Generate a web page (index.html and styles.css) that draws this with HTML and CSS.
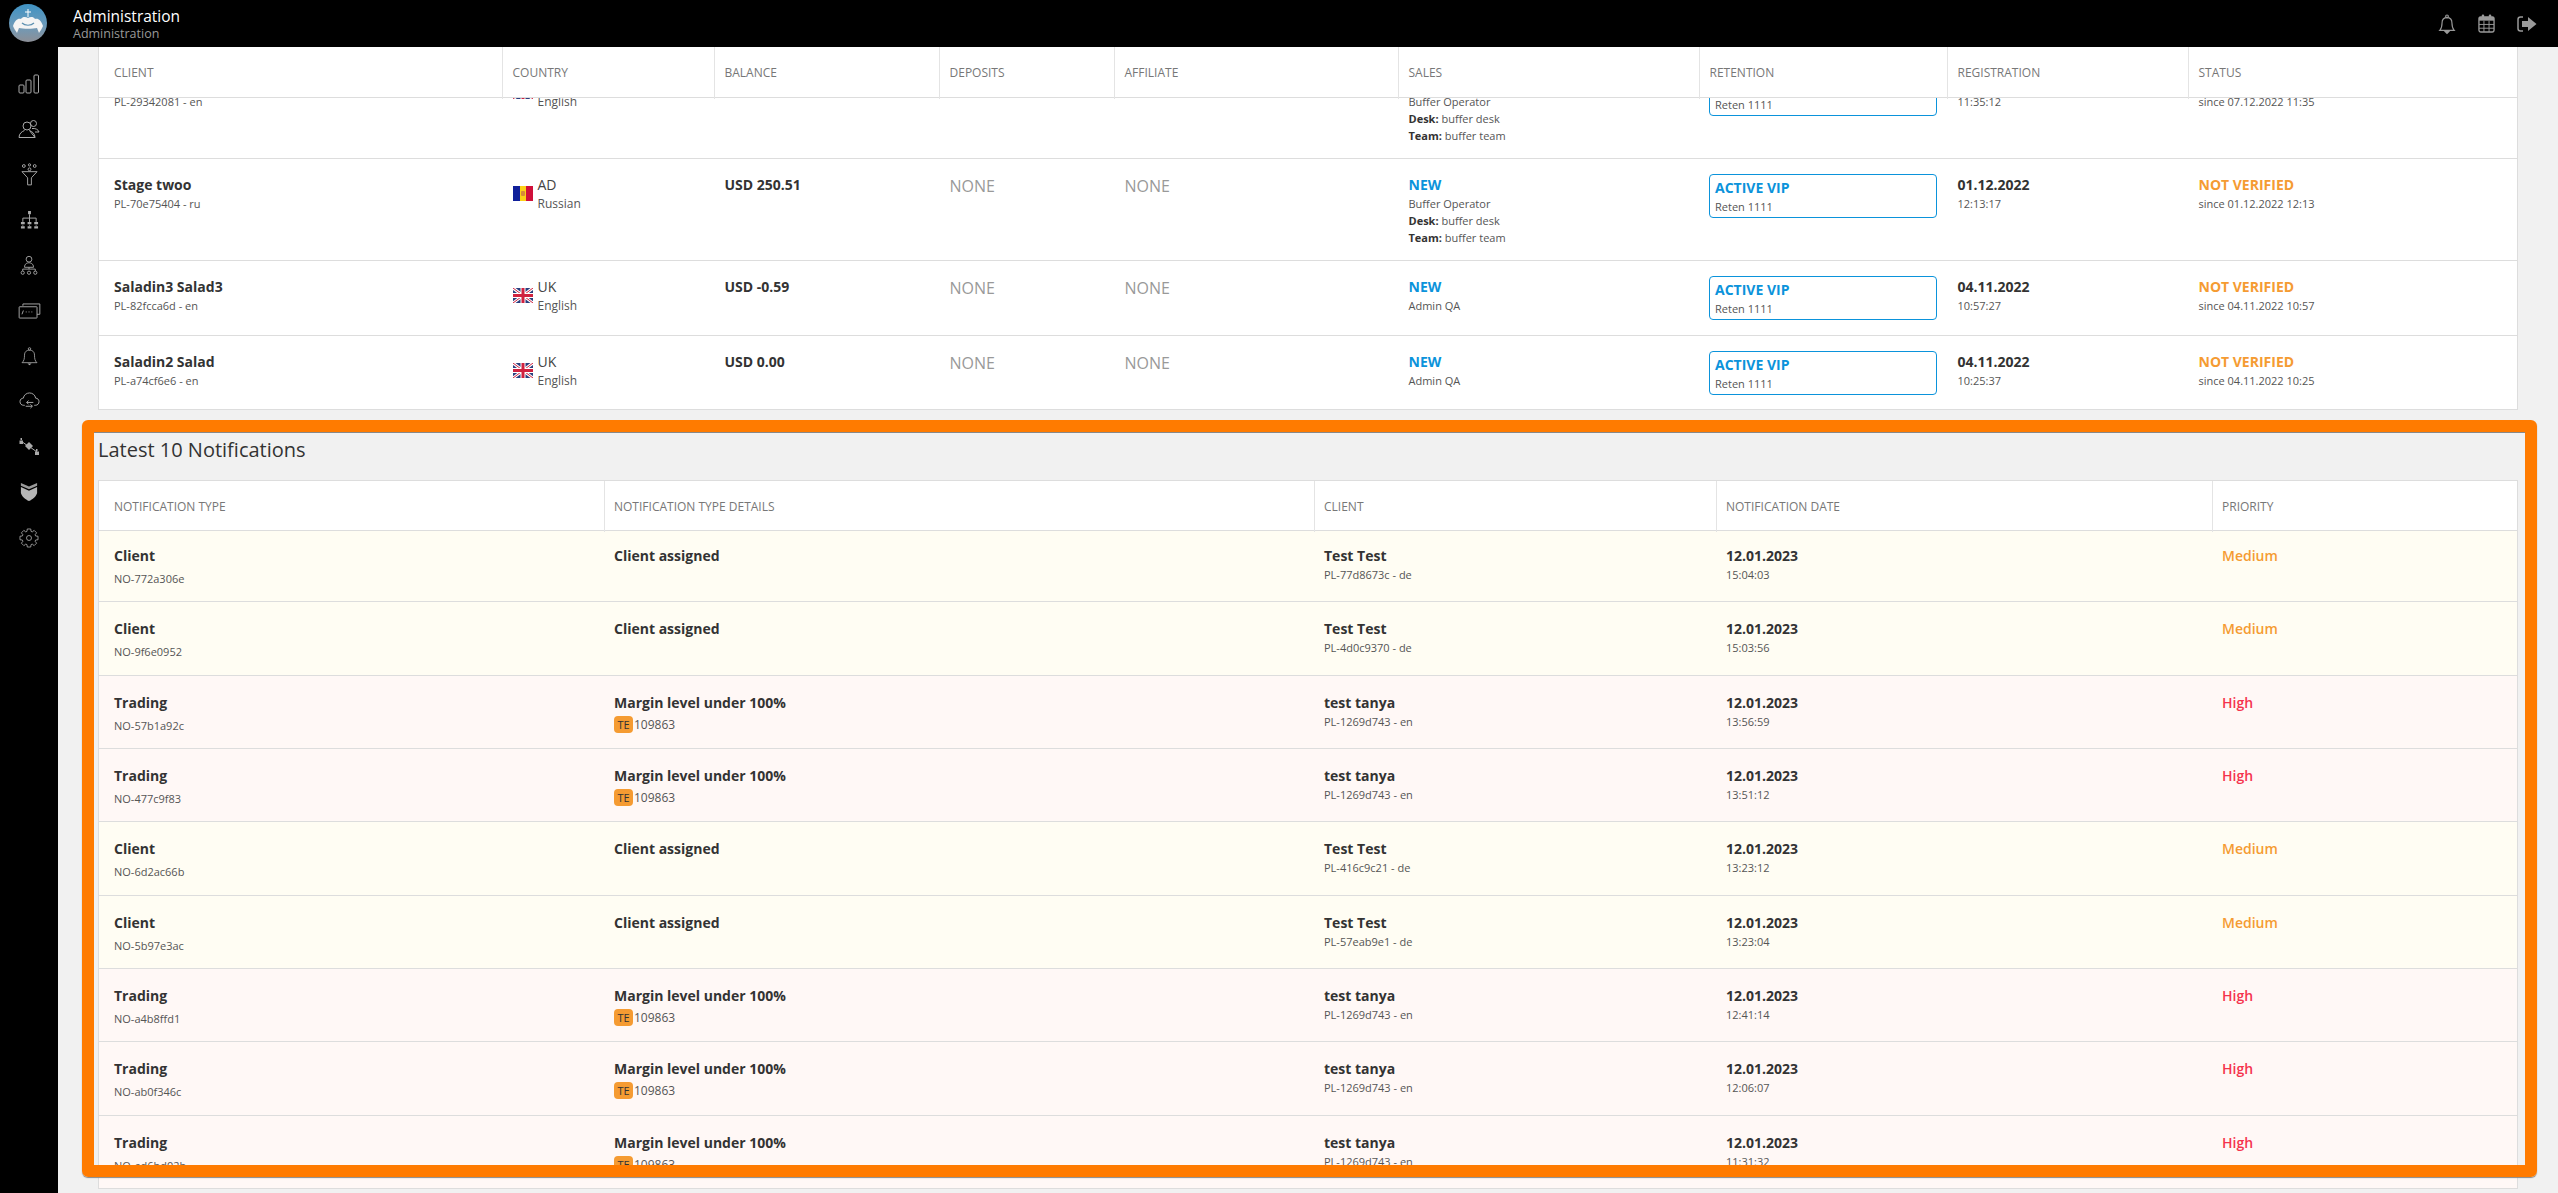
FILE: index.html
```html
<!DOCTYPE html>
<html lang="en">
<head>
    <meta charset="UTF-8">
    <meta name="viewport" content="width=device-width, initial-scale=1.0">
    <title>Administration</title>
    <link rel="stylesheet" href="styles.css">
</head>
<body>
    <svg class="defs" width="0" height="0">
        <symbol id="flag-uk" viewBox="0 0 20 15">
            <rect width="20" height="15" fill="#2a3f7e"/>
            <path d="M0 0L20 15M20 0L0 15" stroke="#fff" stroke-width="3"/>
            <path d="M0 0L20 15M20 0L0 15" stroke="#d0213f" stroke-width="1"/>
            <path d="M10 0V15M0 7.5H20" stroke="#fff" stroke-width="5"/>
            <path d="M10 0V15M0 7.5H20" stroke="#d0213f" stroke-width="3"/>
        </symbol>
        <symbol id="flag-ad" viewBox="0 0 20 15">
            <rect width="7" height="15" fill="#10209a"/>
            <rect x="7" width="6" height="15" fill="#fcd116"/>
            <rect x="13" width="7" height="15" fill="#d0103a"/>
            <rect x="8" y="5" width="4" height="5" rx="1" fill="#d68a3a"/>
        </symbol>
    </svg>

    <header class="topbar">
        <div class="logo">
            <svg viewBox="0 0 38 38" width="38" height="38">
                <defs>
                    <linearGradient id="logo-bg" x1="0" y1="0" x2="0" y2="1">
                        <stop offset="0" stop-color="#3f93c4"/>
                        <stop offset="0.6" stop-color="#6f9ab8"/>
                        <stop offset="1" stop-color="#8d8f96"/>
                    </linearGradient>
                </defs>
                <circle cx="19" cy="19" r="19" fill="url(#logo-bg)"/>
                <path d="M4 22C6 16 9 14 12 15C14 12 17 13 19 14C21 13 24 12 26 15C29 14 32 16 34 22C33 25 31 27 30 29L28 24C24 25 14 25 10 24L8 29C7 27 5 25 4 22Z" fill="#f4f4f4"/>
                <path d="M13 19C16 22 22 22 25 19" stroke="#5b8fb0" stroke-width="1.2" fill="none"/>
                <path d="M19 5V13M16 8H22" stroke="#fff" stroke-width="1"/>
            </svg>
        </div>
        <div class="page-title">
            <div class="page-title-main">Administration</div>
            <div class="page-title-sub">Administration</div>
        </div>
        <div class="top-icons">
            <svg viewBox="0 0 20 24" width="18" height="22" fill="none" stroke="#999" stroke-width="1.3">
                <path d="M2 19C4 17 4.5 15 4.5 11C4.5 7 7 5 10 5C13 5 15.5 7 15.5 11C15.5 15 16 17 18 19Z"/>
                <circle cx="10" cy="3.5" r="1.5"/>
                <path d="M8 20.5H12L10 22.5Z" fill="#999"/>
            </svg>
            <svg viewBox="0 0 18 20" width="17" height="19">
                <rect x="1" y="3" width="16" height="16" rx="2" fill="none" stroke="#999" stroke-width="1.4"/>
                <rect x="1" y="3" width="16" height="4" fill="#999"/>
                <path d="M1 11H17M1 15H17M6.3 7V19M11.7 7V19" stroke="#999" stroke-width="1"/>
                <rect x="4" y="0.5" width="2.5" height="5" rx="1" fill="#999"/>
                <rect x="11.5" y="0.5" width="2.5" height="5" rx="1" fill="#999"/>
            </svg>
            <svg viewBox="0 0 20 16" width="20" height="16">
                <path d="M6 1H3.5C2 1 1 2 1 3.5V12.5C1 14 2 15 3.5 15H6" fill="none" stroke="#999" stroke-width="1.5"/>
                <path d="M5 5H11V1L19.5 8L11 15V11H5Z" fill="#999"/>
            </svg>
        </div>
    </header>

    <div class="layout">
        <nav class="sidebar">
            <!-- dashboard -->
            <a class="nav-item"><svg viewBox="0 0 22 20" width="22" height="20" class="nav-icon">
                <rect x="1" y="11" width="5" height="8" rx="1"/><rect x="8" y="6" width="5" height="13" rx="1"/><rect x="16" y="1" width="4.5" height="18" rx="1"/>
            </svg></a>
            <!-- clients -->
            <a class="nav-item"><svg viewBox="0 0 22 20" width="22" height="20" class="nav-icon">
                <circle cx="9" cy="7" r="4"/><path d="M1 18.5C1 14.5 4 12.5 6.5 11.5M11.5 11.5C14 12.5 17 14.5 17 18.5Z M1 18.5H17"/>
                <circle cx="15.5" cy="4.5" r="3"/><path d="M14 9.5C17 9 20.5 10.5 21 13H17"/>
            </svg></a>
            <!-- leads funnel -->
            <a class="nav-item"><svg viewBox="0 0 18 24" width="17" height="23" class="nav-icon">
                <path d="M1 9H17L11 15.5V23H7V15.5Z"/>
                <circle cx="3" cy="3" r="1.5"/><circle cx="9" cy="1.8" r="1.2"/><circle cx="14.5" cy="3" r="1.5"/><circle cx="9" cy="6.5" r="1.5"/>
            </svg></a>
            <!-- organisation -->
            <a class="nav-item"><svg viewBox="0 0 20 20" width="19" height="20" class="nav-icon">
                <path d="M10 4V8M3 8H17M3 8V12M10 8V12M17 8V12M3 15V16M10 15V16M17 15V16"/>
                <path class="solid" d="M8.5 0.5H11.5V4H8.5ZM1 12H5V14.5H1ZM8 12H12V14.5H8ZM15 12H19V14.5H15ZM1 16.5H5V19H1ZM8 16.5H12V19H8ZM15 16.5H19V19H15Z"/>
            </svg></a>
            <!-- hierarchy -->
            <a class="nav-item"><svg viewBox="0 0 20 22" width="18" height="21" class="nav-icon">
                <circle cx="10" cy="4" r="3.2"/><path d="M5 13C5 9 8 8 10 8C12 8 15 9 15 13Z"/>
                <path d="M10 13V15M3 17V15H17V17"/>
                <circle cx="3" cy="19" r="1.8"/><circle cx="10" cy="19" r="1.8"/><circle cx="17" cy="19" r="1.8"/>
            </svg></a>
            <!-- cards -->
            <a class="nav-item"><svg viewBox="0 0 24 17" width="23" height="16" class="nav-icon">
                <path d="M5 3V1H23V12H20"/><rect x="1" y="4" width="19" height="12" rx="0.5"/>
                <path d="M4 12L5.5 8M8 9.5H9M11 9.5H12M14 9.5H15"/>
            </svg></a>
            <!-- notifications -->
            <a class="nav-item"><svg viewBox="0 0 20 24" width="17" height="20" class="nav-icon">
                <path d="M1 20C3.5 18 4 15 4 11C4 6.5 7 5 10 5C13 5 16 6.5 16 11C16 15 16.5 18 19 20Z"/>
                <circle cx="10" cy="3.5" r="1.5"/><path class="solid" d="M7.5 21H12.5L10 23Z"/>
            </svg></a>
            <!-- cloud transfer -->
            <a class="nav-item"><svg viewBox="0 0 22 20" width="21" height="19" class="nav-icon">
                <path d="M6 14H5C2.5 14 1 12.5 1 10C1 7.5 3 6.5 4.5 6.5C5 3 8 1 11 1C14 1 17 3 17.5 6.5C19.5 6.5 21 8 21 10C21 12.5 19.5 14 17 14H16"/>
                <path d="M15 11H8M10 9L8 11L10 13M7 15H14M12 13L14 15L12 17"/>
            </svg></a>
            <!-- workflow -->
            <a class="nav-item"><svg viewBox="0 0 20 17" width="20" height="17" class="nav-icon">
                <path d="M2 3L9 8M11 9L18 14"/>
                <path class="solid" d="M1.5 0H3V2H1.5ZM0.5 2.5H4V6H0.5ZM10 4L14 8L10 12L6 8ZM17 11H18.5V13H17ZM16 13.5H20V17H16Z"/>
            </svg></a>
            <!-- shield -->
            <a class="nav-item"><svg viewBox="0 0 20 20" width="18" height="20">
                <path d="M1 0L10 4L19 0V3L10 7L1 3Z" fill="#9a9a9a"/>
                <path d="M1 4.5L10 8.5L19 4.5V11C18 15 14 18 10 20C6 18 2 15 1 11Z" fill="#b5b5b5"/>
            </svg></a>
            <!-- settings -->
            <a class="nav-item"><svg viewBox="0 0 24 24" width="20" height="20" class="nav-icon">
                <g transform="translate(12 12)">
                    <polygon stroke-linejoin="round" points="7.94,-2.43 10.83,-2.1 10.83,2.1 7.94,2.43 7.33,3.9 9.14,6.17 6.17,9.14 3.9,7.33 2.43,7.94 2.1,10.83 -2.1,10.83 -2.43,7.94 -3.9,7.33 -6.17,9.14 -9.14,6.17 -7.33,3.9 -7.94,2.43 -10.83,2.1 -10.83,-2.1 -7.94,-2.43 -7.33,-3.9 -9.14,-6.17 -6.17,-9.14 -3.9,-7.33 -2.43,-7.94 -2.1,-10.83 2.1,-10.83 2.43,-7.94 3.9,-7.33 6.17,-9.14 9.14,-6.17 7.33,-3.9"/>
                    <circle r="3"/>
                </g>
            </svg></a>
        </nav>

        <main class="content">
            <!-- Latest clients table, scrolled a little under its header -->
            <section class="data-table clients">
                <div class="head-row">
                    <div class="cell">Client</div>
                    <div class="cell">Country</div>
                    <div class="cell">Balance</div>
                    <div class="cell">Deposits</div>
                    <div class="cell">Affiliate</div>
                    <div class="cell">Sales</div>
                    <div class="cell">Retention</div>
                    <div class="cell">Registration</div>
                    <div class="cell">Status</div>
                </div>
                <div class="rows-clip">
                    <div class="client-rows">
                        <div class="row tall">
                            <div class="cell"><span class="name"></span><small class="sub">PL-29342081 - en</small></div>
                            <div class="cell country"><svg class="flag"><use href="#flag-uk"/></svg><div><span class="code"></span><small class="sub lang">English</small></div></div>
                            <div class="cell"></div>
                            <div class="cell"></div>
                            <div class="cell"></div>
                            <div class="cell"><span class="new"></span><small class="sub">Buffer Operator</small><small class="sub"><b>Desk:</b> buffer desk</small><small class="sub"><b>Team:</b> buffer team</small></div>
                            <div class="cell"><div class="retention"><span class="new"></span><small class="sub">Reten 1111</small></div></div>
                            <div class="cell"><span class="name"></span><small class="sub">11:35:12</small></div>
                            <div class="cell"><span class="status"></span><small class="sub">since 07.12.2022 11:35</small></div>
                        </div>
                        <div class="row tall">
                            <div class="cell"><strong class="name">Stage twoo</strong><small class="sub">PL-70e75404 - ru</small></div>
                            <div class="cell country"><svg class="flag"><use href="#flag-ad"/></svg><div><span class="code">AD</span><small class="sub lang">Russian</small></div></div>
                            <div class="cell"><strong class="name">USD 250.51</strong></div>
                            <div class="cell none">NONE</div>
                            <div class="cell none">NONE</div>
                            <div class="cell"><strong class="new">NEW</strong><small class="sub">Buffer Operator</small><small class="sub"><b>Desk:</b> buffer desk</small><small class="sub"><b>Team:</b> buffer team</small></div>
                            <div class="cell"><div class="retention"><strong class="new">ACTIVE VIP</strong><small class="sub">Reten 1111</small></div></div>
                            <div class="cell"><strong class="name">01.12.2022</strong><small class="sub">12:13:17</small></div>
                            <div class="cell"><strong class="status">NOT VERIFIED</strong><small class="sub">since 01.12.2022 12:13</small></div>
                        </div>
                        <div class="row short">
                            <div class="cell"><strong class="name">Saladin3 Salad3</strong><small class="sub">PL-82fcca6d - en</small></div>
                            <div class="cell country"><svg class="flag"><use href="#flag-uk"/></svg><div><span class="code">UK</span><small class="sub lang">English</small></div></div>
                            <div class="cell"><strong class="name">USD -0.59</strong></div>
                            <div class="cell none">NONE</div>
                            <div class="cell none">NONE</div>
                            <div class="cell"><strong class="new">NEW</strong><small class="sub">Admin QA</small></div>
                            <div class="cell"><div class="retention"><strong class="new">ACTIVE VIP</strong><small class="sub">Reten 1111</small></div></div>
                            <div class="cell"><strong class="name">04.11.2022</strong><small class="sub">10:57:27</small></div>
                            <div class="cell"><strong class="status">NOT VERIFIED</strong><small class="sub">since 04.11.2022 10:57</small></div>
                        </div>
                        <div class="row short">
                            <div class="cell"><strong class="name">Saladin2 Salad</strong><small class="sub">PL-a74cf6e6 - en</small></div>
                            <div class="cell country"><svg class="flag"><use href="#flag-uk"/></svg><div><span class="code">UK</span><small class="sub lang">English</small></div></div>
                            <div class="cell"><strong class="name">USD 0.00</strong></div>
                            <div class="cell none">NONE</div>
                            <div class="cell none">NONE</div>
                            <div class="cell"><strong class="new">NEW</strong><small class="sub">Admin QA</small></div>
                            <div class="cell"><div class="retention"><strong class="new">ACTIVE VIP</strong><small class="sub">Reten 1111</small></div></div>
                            <div class="cell"><strong class="name">04.11.2022</strong><small class="sub">10:25:37</small></div>
                            <div class="cell"><strong class="status">NOT VERIFIED</strong><small class="sub">since 04.11.2022 10:25</small></div>
                        </div>
                    </div>
                </div>
            </section>

            <h2 class="section-title">Latest 10 Notifications</h2>

            <section class="data-table notifications">
                <div class="head-row">
                    <div class="cell">Notification type</div>
                    <div class="cell">Notification type details</div>
                    <div class="cell">Client</div>
                    <div class="cell">Notification date</div>
                    <div class="cell">Priority</div>
                </div>
                <div class="rows-clip">
                    <div class="notif-rows">
                        <div class="row medium">
                            <div class="cell"><strong class="name">Client</strong><small class="sub spaced">NO-772a306e</small></div>
                            <div class="cell"><strong class="name">Client assigned</strong></div>
                            <div class="cell"><strong class="name">Test Test</strong><small class="sub">PL-77d8673c - de</small></div>
                            <div class="cell"><strong class="name">12.01.2023</strong><small class="sub">15:04:03</small></div>
                            <div class="cell"><strong class="priority">Medium</strong></div>
                        </div>
                        <div class="row medium">
                            <div class="cell"><strong class="name">Client</strong><small class="sub spaced">NO-9f6e0952</small></div>
                            <div class="cell"><strong class="name">Client assigned</strong></div>
                            <div class="cell"><strong class="name">Test Test</strong><small class="sub">PL-4d0c9370 - de</small></div>
                            <div class="cell"><strong class="name">12.01.2023</strong><small class="sub">15:03:56</small></div>
                            <div class="cell"><strong class="priority">Medium</strong></div>
                        </div>
                        <div class="row high">
                            <div class="cell"><strong class="name">Trading</strong><small class="sub spaced">NO-57b1a92c</small></div>
                            <div class="cell"><strong class="name">Margin level under 100%</strong><div class="account"><span class="badge">TE</span>109863</div></div>
                            <div class="cell"><strong class="name">test tanya</strong><small class="sub">PL-1269d743 - en</small></div>
                            <div class="cell"><strong class="name">12.01.2023</strong><small class="sub">13:56:59</small></div>
                            <div class="cell"><strong class="priority">High</strong></div>
                        </div>
                        <div class="row high">
                            <div class="cell"><strong class="name">Trading</strong><small class="sub spaced">NO-477c9f83</small></div>
                            <div class="cell"><strong class="name">Margin level under 100%</strong><div class="account"><span class="badge">TE</span>109863</div></div>
                            <div class="cell"><strong class="name">test tanya</strong><small class="sub">PL-1269d743 - en</small></div>
                            <div class="cell"><strong class="name">12.01.2023</strong><small class="sub">13:51:12</small></div>
                            <div class="cell"><strong class="priority">High</strong></div>
                        </div>
                        <div class="row medium">
                            <div class="cell"><strong class="name">Client</strong><small class="sub spaced">NO-6d2ac66b</small></div>
                            <div class="cell"><strong class="name">Client assigned</strong></div>
                            <div class="cell"><strong class="name">Test Test</strong><small class="sub">PL-416c9c21 - de</small></div>
                            <div class="cell"><strong class="name">12.01.2023</strong><small class="sub">13:23:12</small></div>
                            <div class="cell"><strong class="priority">Medium</strong></div>
                        </div>
                        <div class="row medium">
                            <div class="cell"><strong class="name">Client</strong><small class="sub spaced">NO-5b97e3ac</small></div>
                            <div class="cell"><strong class="name">Client assigned</strong></div>
                            <div class="cell"><strong class="name">Test Test</strong><small class="sub">PL-57eab9e1 - de</small></div>
                            <div class="cell"><strong class="name">12.01.2023</strong><small class="sub">13:23:04</small></div>
                            <div class="cell"><strong class="priority">Medium</strong></div>
                        </div>
                        <div class="row high">
                            <div class="cell"><strong class="name">Trading</strong><small class="sub spaced">NO-a4b8ffd1</small></div>
                            <div class="cell"><strong class="name">Margin level under 100%</strong><div class="account"><span class="badge">TE</span>109863</div></div>
                            <div class="cell"><strong class="name">test tanya</strong><small class="sub">PL-1269d743 - en</small></div>
                            <div class="cell"><strong class="name">12.01.2023</strong><small class="sub">12:41:14</small></div>
                            <div class="cell"><strong class="priority">High</strong></div>
                        </div>
                        <div class="row high">
                            <div class="cell"><strong class="name">Trading</strong><small class="sub spaced">NO-ab0f346c</small></div>
                            <div class="cell"><strong class="name">Margin level under 100%</strong><div class="account"><span class="badge">TE</span>109863</div></div>
                            <div class="cell"><strong class="name">test tanya</strong><small class="sub">PL-1269d743 - en</small></div>
                            <div class="cell"><strong class="name">12.01.2023</strong><small class="sub">12:06:07</small></div>
                            <div class="cell"><strong class="priority">High</strong></div>
                        </div>
                        <div class="row high">
                            <div class="cell"><strong class="name">Trading</strong><small class="sub spaced">NO-ed6bd02b</small></div>
                            <div class="cell"><strong class="name">Margin level under 100%</strong><div class="account"><span class="badge">TE</span>109863</div></div>
                            <div class="cell"><strong class="name">test tanya</strong><small class="sub">PL-1269d743 - en</small></div>
                            <div class="cell"><strong class="name">12.01.2023</strong><small class="sub">11:31:32</small></div>
                            <div class="cell"><strong class="priority">High</strong></div>
                        </div>
                    </div>
                </div>
            </section>
        </main>
    </div>

    <!-- orange highlight drawn over the screenshot -->
    <div class="highlight"></div>
</body>
</html>
```

FILE: styles.css
```css
html, body {
    height: 100%;
}

body {
    margin: 0;
    overflow: hidden;
    position: relative;
    font-family: "Open Sans", "Liberation Sans", sans-serif;
    font-size: 14px;
    color: #333;
    background: #f1f1f1;
}

.defs {
    display: block;
    height: 0;
}

/* top bar */
.topbar {
    display: flex;
    align-items: center;
    height: 47px;
    background: #000;
}

.logo {
    display: flex;
    margin-left: 9px;
    margin-top: -1px;
}

.page-title {
    margin-left: 26px;
}

.page-title-main {
    font-size: 15.5px;
    line-height: 20px;
    color: #fff;
}

.page-title-sub {
    font-size: 12.5px;
    line-height: 16px;
    color: #999;
}

.top-icons {
    display: flex;
    align-items: center;
    gap: 22px;
    margin-left: auto;
    margin-right: 21px;
}

/* side navigation */
.layout {
    display: flex;
    height: calc(100% - 47px);
}

.sidebar {
    flex: 0 0 58px;
    padding-top: 14px;
    background: #000;
}

.nav-item {
    display: flex;
    align-items: center;
    justify-content: center;
    height: 45.4px;
}

.nav-icon {
    fill: none;
    stroke: #aaa;
    stroke-width: 1;
}

.nav-icon .solid {
    fill: #aaa;
    stroke: none;
}

/* tables */
.content {
    flex: 1;
    min-width: 0;
    padding: 0 40px;
    overflow: hidden;
}

.data-table {
    background: #fff;
    border-left: 1px solid #ddd;
    border-right: 1px solid #ddd;
}

.clients .head-row,
.clients .row {
    grid-template-columns: 403px 212px 225px 175px 284px 301px 248px 241px 1fr;
}

.notifications {
    border-top: 1px solid #ddd;
}

.notifications .head-row,
.notifications .row {
    grid-template-columns: 504.5px 710px 402px 496px 1fr;
}

.head-row {
    display: grid;
    height: 50px;
    border-bottom: 1px solid #ddd;
    font-size: 12px;
    line-height: 52px;
    text-transform: uppercase;
    color: #777;
}

.notifications .head-row {
    height: 49px;
    line-height: 51px;
}

.head-row .cell,
.notifications .head-row .cell {
    padding: 0 0 0 9.5px;
    border-left: 1px solid #e4e4e4;
}

.head-row .cell:first-child,
.notifications .head-row .cell:first-child {
    padding-left: 15px;
    border-left: 0;
}

.rows-clip {
    overflow: hidden;
}

.client-rows {
    margin-top: -41px;
}

.notif-rows {
    margin-top: -2px;
}

.row {
    display: grid;
    box-sizing: border-box;
    border-bottom: 1px solid #ddd;
}

.row.tall {
    height: 102px;
}

.row.short {
    height: 74.5px;
}

.row.medium,
.row.high {
    height: 73.34px;
}

.row.medium {
    background: #fffdf3;
}

.row.high {
    background: #fff8f6;
}

.cell {
    padding: 16px 0 0 10.5px;
    min-width: 0;
}

.notifications .cell {
    padding-top: 17px;
}

.row .cell:first-child {
    padding-left: 15px;
}

.name,
.new,
.status,
.priority,
.code {
    display: block;
    min-height: 20px;
    line-height: 20px;
    font-size: 14px;
}

.name {
    font-weight: 700;
    color: #333;
}

.new {
    font-weight: 700;
    color: #0b93db;
}

.status {
    font-weight: 700;
    color: #f59b32;
}

.priority {
    font-weight: 600;
}

.medium .priority {
    color: #f59b32;
}

.high .priority {
    color: #f5344e;
}

.sub {
    display: block;
    font-size: 11px;
    line-height: 17px;
    color: #555;
}

.sub.lang {
    font-size: 12px;
    line-height: 18px;
}

.sub b {
    color: #333;
}

.sub.spaced {
    margin-top: 4px;
}

.row .none {
    padding-top: 16px;
    font-size: 16px;
    line-height: 22px;
    color: #999;
}

.country {
    display: flex;
    align-items: flex-start;
}

.code {
    color: #444;
}

.flag {
    flex: none;
    width: 20px;
    height: 15px;
    margin: 11px 5px 0 0;
}

.retention {
    box-sizing: border-box;
    height: 44px;
    margin: -1px 10px 0 -0.5px;
    padding: 3px 0 0 5px;
    border: 1px solid #0b93db;
    border-radius: 4px;
    background: #fff;
}

.section-title {
    height: 70px;
    margin: 0;
    padding-top: 26px;
    box-sizing: border-box;
    font-size: 20px;
    font-weight: 400;
    line-height: 28px;
    color: #333;
}

.account {
    display: flex;
    align-items: center;
    margin-top: 3px;
    font-size: 12px;
    line-height: 17px;
    color: #555;
}

.badge {
    width: 19px;
    height: 17px;
    margin-right: 1px;
    border-radius: 4px;
    background: #f59b32;
    color: #333;
    font-size: 11px;
    text-align: center;
}

/* annotation box, lies over the page */
.highlight {
    position: absolute;
    left: 82px;
    top: 420px;
    box-sizing: border-box;
    width: 2455px;
    height: 757px;
    border: 12px solid #ff7b00;
    border-radius: 6px;
    box-shadow: 0 1px 1px #888, inset 0 1px 0 #888;
}
```
